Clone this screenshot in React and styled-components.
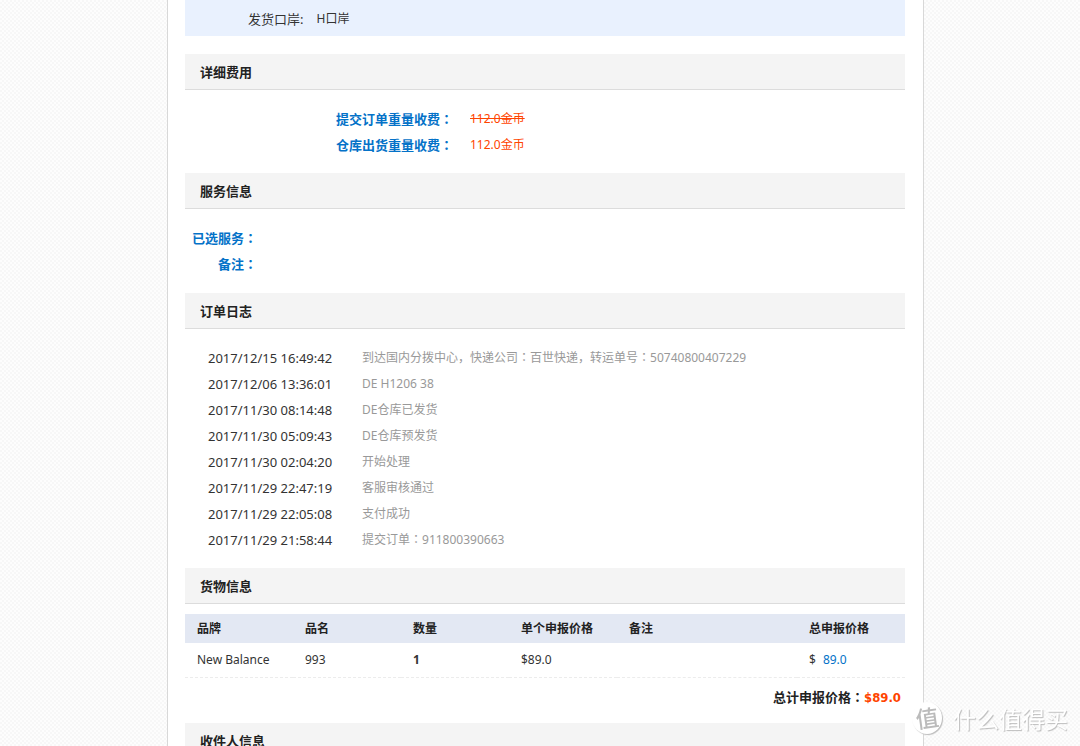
import React from 'react'
import styled, { createGlobalStyle } from 'styled-components'

const GlobalStyle = createGlobalStyle`
  * {
    box-sizing: border-box;
  }

  body {
    margin: 0;
    color: #333;
    font-family: 'Noto Sans', 'Noto Sans CJK SC', sans-serif;
    font-size: 13px;
    line-height: 26px;
    background-color: #fdfdfd;
    background-image: conic-gradient(#f7f7f7 25%, #fdfdfd 0 50%, #f7f7f7 0 75%, #fdfdfd 0);
    background-size: 4px 4px;
  }
`
const Page = styled.div`
  display: flex;
  justify-content: center;
  padding-left: 11px;
`
const Sheet = styled.main`
  width: 100%;
  max-width: 757px;
  min-height: 100vh;
  padding: 0 18px 0 17px;
  border: solid #d8d8d8;
  border-width: 0 1px;
  background: #fff;
`
const PortBar = styled.div`
  display: flex;
  gap: 13px;
  margin-bottom: 18px;
  padding: 6px 0 4px 63px;
  background: #e9f1fe;
`
const PortValue = styled.span`
  font-size: 12px;
`
const Title = styled.h2`
  margin: 0;
  height: 36px;
  padding-left: 15px;
  border-bottom: 1px solid #dcdcdc;
  background: #f4f4f4;
  color: #222;
  font-size: 13px;
  font-weight: bold;
  line-height: 36px;
`
const Fields = styled.dl`
  display: grid;
  grid-template-columns: ${({ $label }) => $label}px 1fr;
  column-gap: 17px;
  margin: 0;
  padding: 16px 0 ${({ $bottom }) => $bottom || 15}px;
`
const Label = styled.dt`
  color: #0472c8;
  font-weight: bold;
  text-align: right;
`
const Value = styled.dd`
  margin: 0;
  min-height: 26px;
  color: #f40;
  font-size: 12px;
`
// full-width punctuation that sits in the middle of its box
const Mid = styled.span`
  font-family: 'Noto Sans CJK TC', sans-serif;
  line-height: 1;
`
const Log = styled.ul`
  margin: 0;
  padding: 16px 0 15px 23px;
  list-style: none;
`
const LogRow = styled.li`
  display: flex;
`
const Time = styled.time`
  flex: 0 0 154px;
`
const Message = styled.span`
  color: #999;
  font-size: 12px;
`
const Table = styled.table`
  width: 100%;
  margin-top: 10px;
  border-collapse: collapse;
  table-layout: fixed;
  font-size: 12px;
`
const Th = styled.th`
  width: ${({ $width }) => $width || 15}%;
  height: 29px;
  padding: 0 0 0 12px;
  background: #e3e8f3;
  color: #222;
  text-align: left;
`
const Td = styled.td`
  height: 34px;
  padding: 0 0 0 12px;
  border-bottom: 1px dashed #ececec;
`
const Price = styled.span`
  margin-left: 7px;
  color: #0472c8;
`
const Total = styled.p`
  margin: 0;
  padding: 6px 4px 12px 0;
  color: #222;
  font-weight: bold;
  text-align: right;
`
const Amount = styled.span`
  color: #f40;
  font-family: 'DejaVu Sans Condensed', sans-serif;
`
const Mark = styled.div`
  position: fixed;
  right: 12px;
  bottom: 12px;
  display: flex;
  align-items: center;
  gap: 11px;
  color: #fff;
  font-family: 'Noto Sans CJK SC', sans-serif;
  font-size: 23px;
  line-height: 32px;
  text-shadow: 1px 1px 1px #bbb;
`
const Badge = styled.span`
  width: 30px;
  height: 32px;
  border-radius: 50%;
  background: #fff;
  box-shadow: 1px 1px 1px #bbb;
  color: #bbb;
  font-weight: 500;
  line-height: 30px;
  text-align: center;
  text-shadow: none;
`
const Tilted = styled.span`
  display: block;
  transform: rotate(-8deg);
`

const Colon = () => <Mid lang="zh-TW">：</Mid>

const logs = [
  ['2017/12/15 16:49:42', <>到达国内分拨中心，快递公司<Colon />百世快递，转运单号<Colon />50740800407229</>],
  ['2017/12/06 13:36:01', 'DE H1206 38'],
  ['2017/11/30 08:14:48', 'DE仓库已发货'],
  ['2017/11/30 05:09:43', 'DE仓库预发货'],
  ['2017/11/30 02:04:20', '开始处理'],
  ['2017/11/29 22:47:19', '客服审核通过'],
  ['2017/11/29 22:05:08', '支付成功'],
  ['2017/11/29 21:58:44', <>提交订单<Colon />911800390663</>],
]

function Goods() {
  return (
    <>
      <Table>
        <thead>
          <tr>
            <Th>品牌</Th>
            <Th>品名</Th>
            <Th>数量</Th>
            <Th>单个申报价格</Th>
            <Th $width={25}>备注</Th>
            <Th>总申报价格</Th>
          </tr>
        </thead>
        <tbody>
          <tr>
            <Td>New Balance</Td>
            <Td>993</Td>
            <Td><b>1</b></Td>
            <Td>$89.0</Td>
            <Td />
            <Td>$<Price>89.0</Price></Td>
          </tr>
        </tbody>
      </Table>
      <Total>总计申报价格<Colon /><Amount>$89.0</Amount></Total>
    </>
  )
}

function App() {
  return (
    <Page lang="zh-CN">
      <GlobalStyle />
      <Sheet>
        <PortBar>
          <span>发货口岸:</span>
          <PortValue>H口岸</PortValue>
        </PortBar>

        <Title>详细费用</Title>
        <Fields $label={268}>
          <Label>提交订单重量收费<Colon /></Label>
          <Value><del>112.0金币</del></Value>
          <Label>仓库出货重量收费<Colon /></Label>
          <Value>112.0金币</Value>
        </Fields>

        <Title>服务信息</Title>
        <Fields $label={72} $bottom={16}>
          <Label>已选服务<Colon /></Label>
          <Value />
          <Label>备注<Colon /></Label>
          <Value />
        </Fields>

        <Title>订单日志</Title>
        <Log>
          {logs.map(([time, message]) => (
            <LogRow key={time}>
              <Time>{time}</Time>
              <Message>{message}</Message>
            </LogRow>
          ))}
        </Log>

        <Title>货物信息</Title>
        <Goods />

        <Title>收件人信息</Title>
      </Sheet>
      <Mark>
        <Badge><Tilted>值</Tilted></Badge>
        <span>什么值得买</span>
      </Mark>
    </Page>
  )
}

export default App
